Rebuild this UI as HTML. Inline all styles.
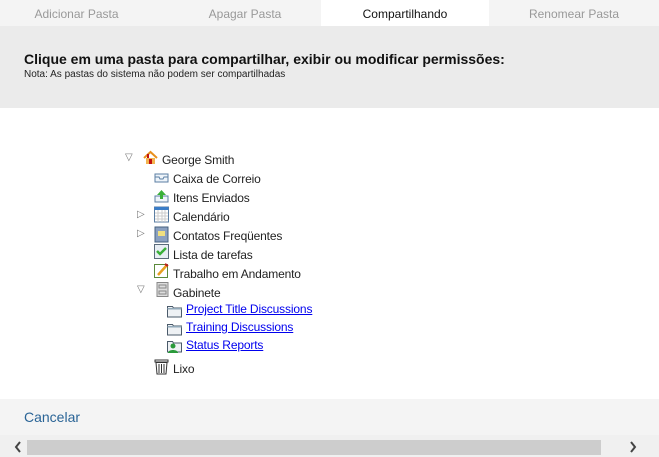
<!DOCTYPE html>
<html><head><style>
body{margin:0;width:659px;height:457px;position:relative;overflow:hidden;font-family:"Liberation Sans",sans-serif;background:#fff;color:#222}
.tabs{position:absolute;top:0;left:0;width:659px;height:26px;background:#f4f4f4}
.tab{position:absolute;top:0;height:26px;line-height:28px;font-size:12px;color:#999;text-align:center}
.hdr{position:absolute;top:26px;left:0;width:659px;height:82px;background:#ebebeb}
.t{position:absolute;font-size:12px;white-space:nowrap;line-height:14px;letter-spacing:-0.15px}
.ic{position:absolute;width:15px;height:15px}
a{color:#0000ee;text-decoration:underline}
.arr{position:absolute;font-size:10px;color:#777}
</style></head><body>
<div class="tabs">
<div class="tab" style="left:0;width:153px">Adicionar Pasta</div>
<div class="tab" style="left:170px;width:150px">Apagar Pasta</div>
<div class="tab" style="left:321px;width:168px;background:#fff;color:#111">Compartilhando</div>
<div class="tab" style="left:489px;width:170px">Renomear Pasta</div>
</div>
<div class="hdr">
<div class="t" style="left:24px;top:26px;font-size:14px;font-weight:bold;color:#111;letter-spacing:0">Clique em uma pasta para compartilhar, exibir ou modificar permissões:</div>
<div class="t" style="left:24px;top:42px;font-size:10px;letter-spacing:0">Nota: As pastas do sistema não podem ser compartilhadas</div>
</div>

<div class="arr" style="left:125px;top:152px">▽</div>
<svg class="ic" style="left:143px;top:150px" viewBox="0 0 15 15"><path d="M1 8L7.5 2L14 8" fill="none" stroke="#e8901c" stroke-width="2"/><rect x="3" y="8" width="9" height="6" fill="#f3b450"/><rect x="4" y="4" width="2" height="4" fill="#c01010"/><rect x="6" y="9" width="3" height="5" fill="#c01010"/></svg>
<div class="t" style="left:162px;top:153px">George Smith</div>

<svg class="ic" style="left:154px;top:170px" viewBox="0 0 15 15"><rect x="1" y="4" width="13" height="8" fill="#eef4fa" stroke="#5b7ea3"/><path d="M1 7h4l1 2h3l1-2h4" fill="none" stroke="#5b7ea3"/></svg>
<div class="t" style="left:173px;top:172px">Caixa de Correio</div>

<svg class="ic" style="left:154px;top:189px" viewBox="0 0 15 15"><rect x="1" y="7" width="13" height="6" fill="#eef4fa" stroke="#5b7ea3"/><path d="M7.5 1L3 6h3v4h3V6h3z" fill="#3ab03a"/></svg>
<div class="t" style="left:173px;top:191px">Itens Enviados</div>

<div class="arr" style="left:137px;top:209px">▷</div>
<svg class="ic" style="left:154px;top:206px;height:17px" viewBox="0 0 15 17"><rect x="0.5" y="1" width="14" height="15" fill="#fff" stroke="#5b7ea3"/><rect x="0.5" y="1" width="14" height="3" fill="#3a7dc8"/><path d="M1 7h13M1 10h13M1 13h13M4 4v12M8 4v12M11 4v12" stroke="#ccc"/></svg>
<div class="t" style="left:173px;top:210px">Calendário</div>

<div class="arr" style="left:137px;top:228px">▷</div>
<svg class="ic" style="left:154px;top:226px;height:17px" viewBox="0 0 15 17"><rect x="1" y="1" width="13" height="15" fill="#8aa0c0" stroke="#45607f"/><rect x="4" y="5" width="7" height="5" fill="#f0e080"/></svg>
<div class="t" style="left:173px;top:229px">Contatos Freqüentes</div>

<svg class="ic" style="left:154px;top:244px" viewBox="0 0 15 15"><rect x="0.5" y="0.5" width="14" height="14" fill="#e8eef4" stroke="#5b6b7b"/><path d="M3 7l3 3 6-6" fill="none" stroke="#3ab03a" stroke-width="2.5"/></svg>
<div class="t" style="left:173px;top:248px">Lista de tarefas</div>

<svg class="ic" style="left:154px;top:263px" viewBox="0 0 15 15"><rect x="0.5" y="1.5" width="13" height="13" fill="#fff" stroke="#5b8a3a"/><path d="M4 12L13 2" stroke="#e8a020" stroke-width="2.5"/><path d="M11 1l3 2" stroke="#c02020" stroke-width="2"/></svg>
<div class="t" style="left:173px;top:267px">Trabalho em Andamento</div>

<div class="arr" style="left:137px;top:284px">▽</div>
<svg class="ic" style="left:155px;top:282px" viewBox="0 0 15 15"><rect x="2" y="0.5" width="11" height="14" fill="#ddd" stroke="#888"/><rect x="4" y="3" width="7" height="3" fill="none" stroke="#888"/><rect x="4" y="9" width="7" height="3" fill="none" stroke="#888"/></svg>
<div class="t" style="left:173px;top:286px">Gabinete</div>

<svg class="ic" style="left:167px;top:303px" viewBox="0 0 15 15"><path d="M0.5 3.5h5l1 1.5h8v9h-14z" fill="#eef1f4" stroke="#4a5a6a"/><rect x="0.5" y="5" width="14" height="1.5" fill="#90a8b8"/></svg>
<div class="t" style="left:186px;top:302px"><a>Project Title Discussions</a></div>

<svg class="ic" style="left:167px;top:321px" viewBox="0 0 15 15"><path d="M0.5 3.5h5l1 1.5h8v9h-14z" fill="#eef1f4" stroke="#4a5a6a"/><rect x="0.5" y="5" width="14" height="1.5" fill="#90a8b8"/></svg>
<div class="t" style="left:186px;top:320px"><a>Training Discussions</a></div>

<svg class="ic" style="left:167px;top:338px" viewBox="0 0 15 15"><path d="M0.5 3.5h5l1 1.5h8v9h-14z" fill="#eef1f4" stroke="#4a5a6a"/><circle cx="6" cy="8" r="2.5" fill="#2a9a3a"/><path d="M1 15c0-4 10-4 10 0z" fill="#2a9a3a"/></svg>
<div class="t" style="left:186px;top:338px"><a>Status Reports</a></div>

<svg class="ic" style="left:154px;top:358px;height:17px" viewBox="0 0 15 17"><rect x="1" y="2" width="13" height="2" fill="#fff" stroke="#333"/><path d="M2 4.5h11l-1 11.5h-9z" fill="#fff" stroke="#333"/><path d="M5 6v9M7.5 6v9M10 6v9" stroke="#333"/></svg>
<div class="t" style="left:173px;top:362px">Lixo</div>

<div style="position:absolute;left:0;top:399px;width:659px;height:36px;background:#f4f4f4"></div>
<div class="t" style="left:24px;top:410px;font-size:14px;color:#2a6496;letter-spacing:0">Cancelar</div>
<div style="position:absolute;left:0;top:435px;width:659px;height:22px;background:#f0f0f0"></div>
<div style="position:absolute;left:27px;top:440px;width:574px;height:15px;background:#cdcdcd"></div>
<svg style="position:absolute;left:14px;top:441px" width="8" height="12" viewBox="0 0 8 12"><path d="M6 1L2 6l4 5" fill="none" stroke="#444" stroke-width="2"/></svg>
<svg style="position:absolute;left:629px;top:441px" width="8" height="12" viewBox="0 0 8 12"><path d="M2 1l4 5-4 5" fill="none" stroke="#444" stroke-width="2"/></svg>
</body></html>
